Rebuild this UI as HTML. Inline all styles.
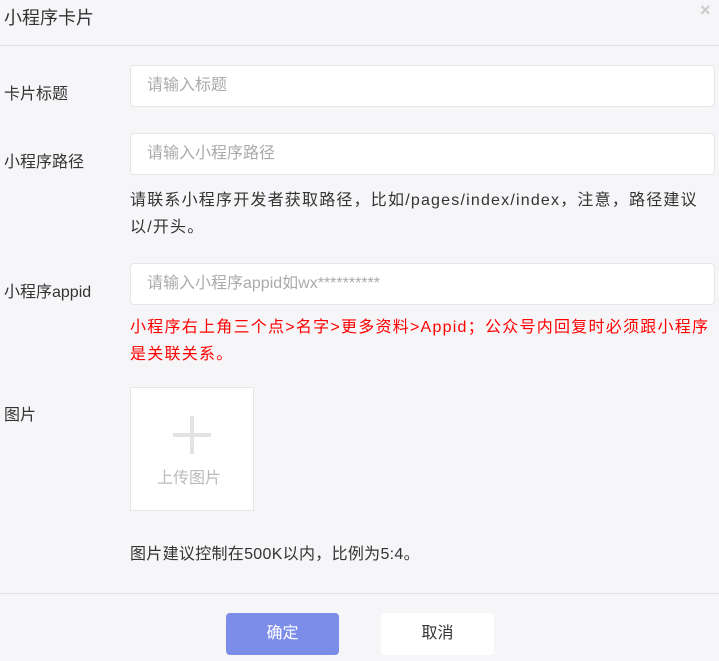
<html><head><style>
body{margin:0;width:719px;height:661px;background:#f6f6f8;font-family:"Liberation Sans","Noto Sans CJK SC",sans-serif;position:relative;overflow:hidden;color:#333}
.a{position:absolute;white-space:nowrap}
.in{position:absolute;left:130px;width:585px;height:42px;background:#fff;border:1px solid #e6e6e6;border-radius:4px;box-sizing:border-box;padding-left:16px;line-height:40px;color:#aaa;font-size:16px}
.l{font-size:16px;color:#333}
</style></head><body>
<div class="a" style="left:4px;top:4px;font-size:18px;color:#333">小程序卡片</div>
<div class="a" style="left:700px;top:0px;font-size:18px;color:#ccc;font-weight:bold">×</div>
<div class="a" style="left:0;top:45px;width:719px;height:1px;background:#e2e2e2"></div>
<div class="a l" style="left:4px;top:80px">卡片标题</div>
<div class="in" style="top:65px">请输入标题</div>
<div class="a l" style="left:4px;top:148px">小程序路径</div>
<div class="in" style="top:133px">请输入小程序路径</div>
<div class="a l" style="left:130px;top:187px;line-height:27px;letter-spacing:1.2px">请联系小程序开发者获取路径，比如/pages/index/index，注意，路径建议<br>以/开头。</div>
<div class="a l" style="left:4px;top:278px">小程序appid</div>
<div class="in" style="top:263px">请输入小程序appid如wx**********</div>
<div class="a l" style="left:130px;top:314px;line-height:27px;color:#f00;letter-spacing:1.25px">小程序右上角三个点&gt;名字&gt;更多资料&gt;Appid；公众号内回复时必须跟小程序<br>是关联关系。</div>
<div class="a l" style="left:4px;top:401px">图片</div>
<div class="a" style="left:130px;top:387px;width:124px;height:124px;background:#fff;border:1px solid #e6e6e6;box-sizing:border-box">
<div class="a" style="left:42px;top:45px;width:38px;height:4px;background:#e3e3e3"></div>
<div class="a" style="left:59px;top:28px;width:4px;height:38px;background:#e3e3e3"></div>
<div class="a" style="left:26px;top:76px;font-size:16px;color:#bbb">上传图片</div></div>
<div class="a l" style="left:130px;top:540px;letter-spacing:0.3px">图片建议控制在500K以内，比例为5:4。</div>
<div class="a" style="left:0;top:593px;width:719px;height:1px;background:#e2e2e2"></div>
<div class="a" style="left:226px;top:613px;width:113px;height:42px;background:#7b8ce9;border-radius:4px;color:#fff;font-size:16px;text-align:center;line-height:42px">确定</div>
<div class="a" style="left:381px;top:613px;width:113px;height:42px;background:#fff;border-radius:4px;color:#333;font-size:16px;text-align:center;line-height:42px">取消</div>
</body></html>
